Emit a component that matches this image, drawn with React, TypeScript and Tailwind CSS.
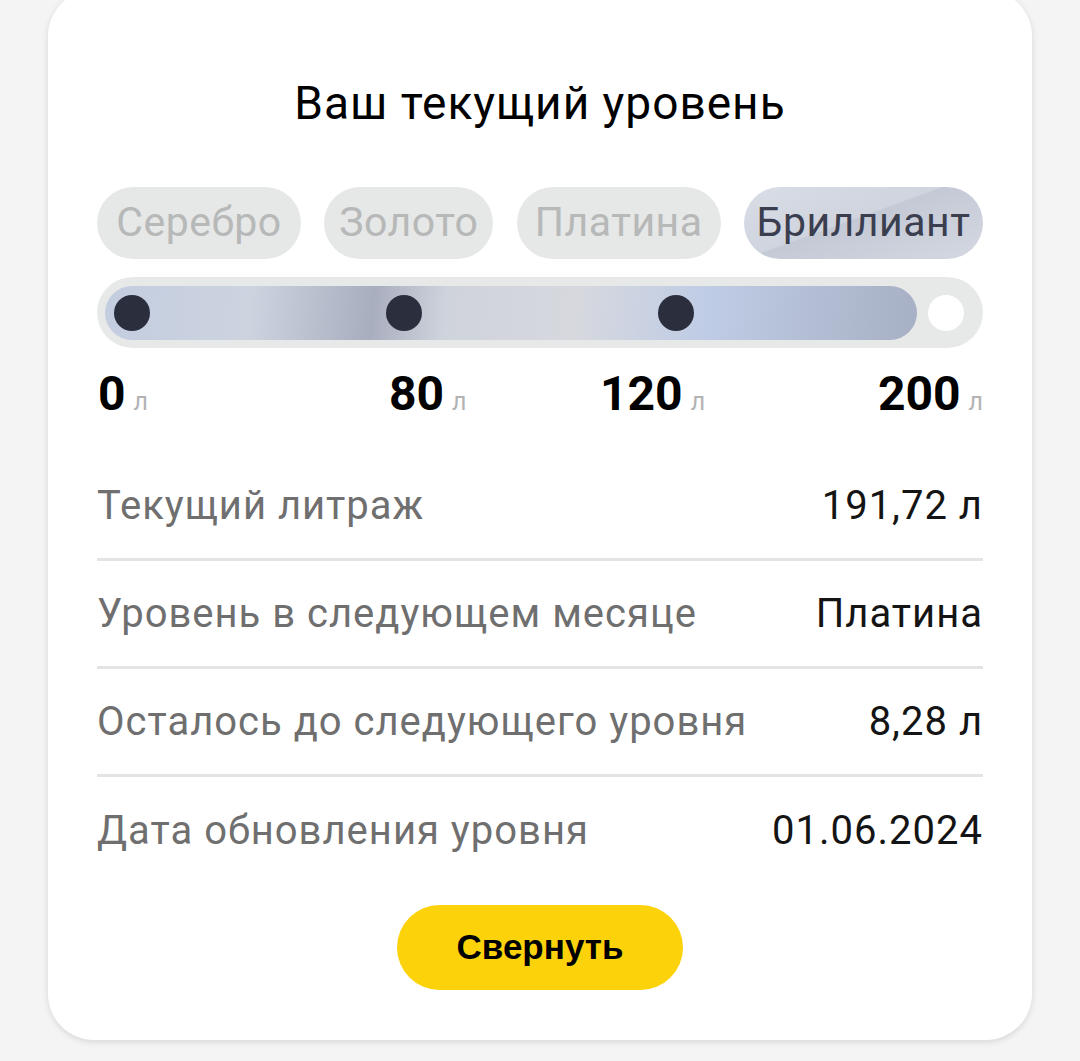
const levels = [
  { name: "Серебро", width: "w-[204px]", active: false },
  { name: "Золото", width: "w-[169px]", active: false },
  { name: "Платина", width: "w-[204px]", active: false },
  { name: "Бриллиант", width: "w-[239px]", active: true },
];

const rows = [
  { label: "Текущий литраж", value: "191,72 л" },
  { label: "Уровень в следующем месяце", value: "Платина" },
  { label: "Осталось до следующего уровня", value: "8,28 л" },
  { label: "Дата обновления уровня", value: "01.06.2024" },
];

function Mark({ value, className = "" }: { value: string; className?: string }) {
  return (
    <div className={`flex items-baseline gap-[8px] ${className}`}>
      <span className="text-[48px] font-bold leading-none text-black">{value}</span>
      <span className="text-[25px] leading-none text-[#b3b3b3]">л</span>
    </div>
  );
}

export default function App() {
  return (
    <div className="min-h-[1061px] w-full overflow-hidden bg-[#f4f4f4] font-['Roboto',sans-serif]">
      <div className="mx-[48px] -mt-[10px] rounded-[46px] bg-white px-[49px] pb-[50px] pt-[85px] shadow-[0_2px_6px_rgba(0,0,0,0.12)]">
        <h1 className="text-center text-[46px] font-normal leading-[56px] tracking-[1px] text-black">
          Ваш текущий уровень
        </h1>

        <div className="mt-[56px] flex justify-between">
          {levels.map((level) => (
            <div
              key={level.name}
              className={`flex h-[72px] items-center justify-center rounded-full text-[41px] tracking-[0.5px] ${level.width} ${
                level.active
                  ? "bg-[linear-gradient(160deg,#d9dde6_0%,#cfd4de_45%,#c4c9d6_46%,#d4d8e1_100%)] text-[#3a3e4e]"
                  : "bg-[#e6e7e7] text-[#b7b8b8]"
              }`}
            >
              {level.name}
            </div>
          ))}
        </div>

        <div className="mt-[18px] flex h-[71px] items-center rounded-full bg-[#e7e8e8] pl-[8px] pr-[19px]">
          <div className="flex h-[54px] w-[814px] items-center gap-[236px] rounded-full bg-[linear-gradient(95deg,#c3cde0_0%,#cdd3df_18%,#a9aebf_33%,#cfd3dc_42%,#d6d8de_58%,#bfcce5_74%,#a7b0c4_100%)] pl-[9px]">
            <div className="h-[36px] w-[36px] rounded-full bg-[#2b2e3d]" />
            <div className="h-[36px] w-[36px] rounded-full bg-[#2b2e3d]" />
            <div className="h-[36px] w-[36px] rounded-full bg-[#2b2e3d]" />
          </div>
          <div className="ml-[11px] h-[36px] w-[36px] rounded-full bg-white" />
        </div>

        <div className="mt-[21px] flex h-[50px] items-center">
          <Mark value="0" className="w-[292px] pl-[1px]" />
          <Mark value="80" className="w-[211px]" />
          <Mark value="120" />
          <Mark value="200" className="ml-auto" />
        </div>

        <div className="mt-[34px]">
          {rows.map((row, i) => (
            <div
              key={row.label}
              className={`flex h-[108px] items-center justify-between text-[40px] tracking-[1px] ${
                i < rows.length - 1 ? "border-b-[3px] border-[#e4e4e4]" : ""
              }`}
            >
              <span className="text-[#6f6f6f]">{row.label}</span>
              <span className="text-[#141414]">{row.value}</span>
            </div>
          ))}
        </div>

        <div className="mt-[20px] flex justify-center">
          <button
            type="button"
            className="flex h-[85px] w-[286px] items-center justify-center rounded-full bg-[#fcd20a] font-['Liberation_Sans',sans-serif] text-[35px] font-bold text-black"
          >
            Свернуть
          </button>
        </div>
      </div>
    </div>
  );
}
